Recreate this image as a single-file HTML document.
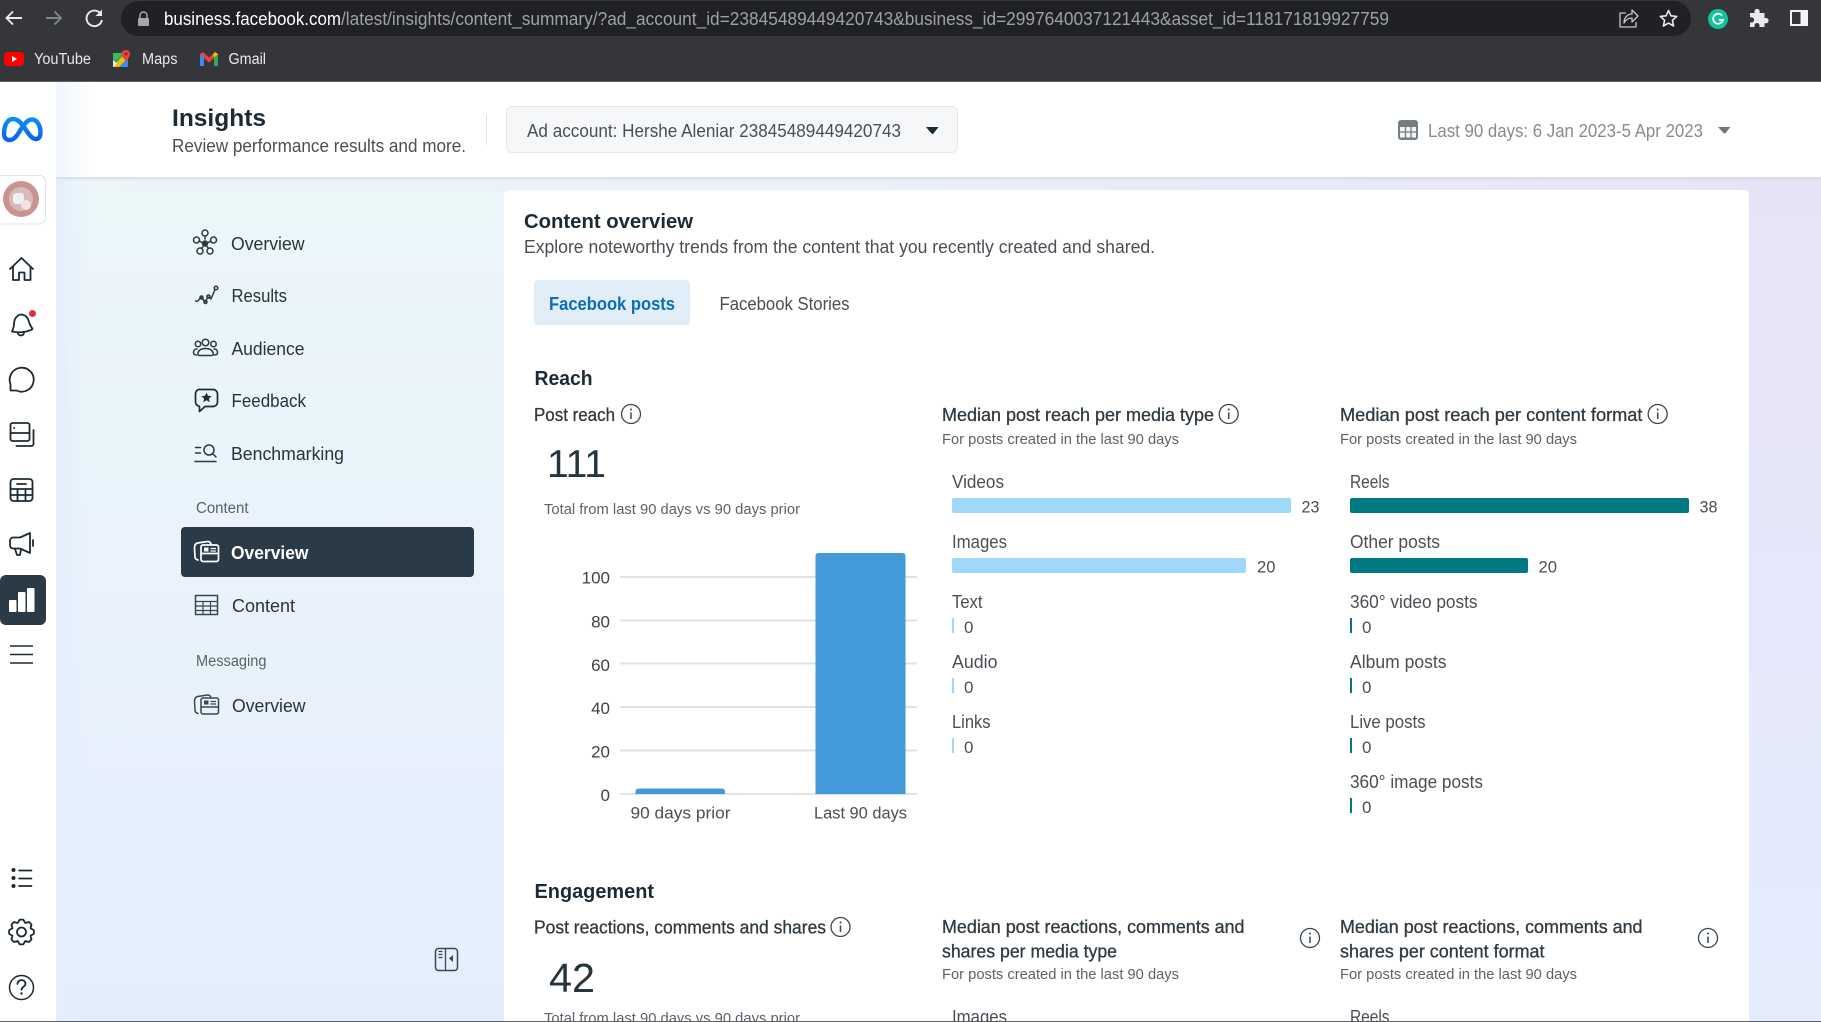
<!DOCTYPE html>
<html><head><meta charset="utf-8"><title>Insights</title>
<style>
html,body{margin:0;padding:0;width:1821px;height:1022px;overflow:hidden;background:#fff}
svg{display:block;position:absolute;left:0;top:0}
text{font-family:"Liberation Sans",sans-serif;white-space:pre}
.n{font-size:18px;fill:#26343d}
.b{font-size:18px;fill:#4a4f55}
.m{font-size:18px;fill:#2f3a42;stroke:#2f3a42;stroke-width:.3px}
.h{font-size:20px;font-weight:bold;fill:#1c2b33}
.s{font-size:15px;fill:#5b6268}
.v{font-size:17px;fill:#4a4f55}
.a{font-size:17px;fill:#3c4247}
.i{fill:none;stroke:#1c2b33;stroke-width:1.8;stroke-linecap:round;stroke-linejoin:round}
.j{fill:none;stroke:#2b3a44;stroke-width:1.5;stroke-linecap:round;stroke-linejoin:round}
</style></head><body>
<svg width="1821" height="1022" viewBox="0 0 1821 1022" xmlns="http://www.w3.org/2000/svg">
<defs>
<linearGradient id="bg" x1="0" y1="0" x2="0" y2="1"><stop offset="0" stop-color="#ebf6f9"/><stop offset=".45" stop-color="#eaf3fc"/><stop offset="1" stop-color="#e3edfc"/></linearGradient>
<linearGradient id="bgr" x1="0" y1="0" x2="0" y2="1"><stop offset="0" stop-color="#e7e3f6"/><stop offset=".5" stop-color="#e5e8fa"/><stop offset="1" stop-color="#e4ecfc"/></linearGradient>
<linearGradient id="band" x1="0" y1="0" x2="1" y2="0"><stop offset="0" stop-color="#ebf6f9"/><stop offset=".45" stop-color="#e9f0f8"/><stop offset="1" stop-color="#e7e3f6"/></linearGradient>
<linearGradient id="hl" x1="0" y1="0" x2="1" y2="0"><stop offset="0" stop-color="#f1f6fd"/><stop offset="1" stop-color="#ffffff"/></linearGradient>
<linearGradient id="mt" x1="0" y1="0" x2="0" y2="1"><stop offset="0" stop-color="#0b8cff"/><stop offset="1" stop-color="#0a63e8"/></linearGradient>
<linearGradient id="lft" x1="0" y1="0" x2="1" y2="0"><stop offset="0" stop-color="#e4eefc" stop-opacity=".9"/><stop offset="1" stop-color="#e4eefc" stop-opacity="0"/></linearGradient>
<linearGradient id="sh" x1="0" y1="0" x2="0" y2="1"><stop offset="0" stop-color="#cfd4da" stop-opacity=".7"/><stop offset="1" stop-color="#cfd4da" stop-opacity="0"/></linearGradient>
</defs>

<!-- page bg -->
<rect x="0" y="82" width="1821" height="940" fill="#fff"/>
<rect x="56" y="177" width="1765" height="845" fill="url(#bg)"/>
<rect x="56" y="177" width="1765" height="14" fill="url(#band)"/>
<rect x="1749" y="177" width="72" height="845" fill="url(#bgr)"/>
<rect x="56" y="177" width="30" height="845" fill="url(#lft)"/>
<rect x="56" y="82" width="40" height="95" fill="url(#hl)"/>
<rect x="56" y="177" width="1765" height="4" fill="url(#sh)"/>

<!-- browser chrome -->
<rect x="0" y="0" width="1821" height="81" fill="#35363a"/>
<rect x="0" y="81" width="1821" height="1" fill="#5f6368"/>
<rect x="121" y="1" width="1570" height="35" rx="17.5" fill="#202124"/>
<path d="M22 18H6.500M13 11.500 6.500 18l6.500 6.500" fill="none" stroke="#e8eaed" stroke-width="1.900"/>
<path d="M61 18H46M54.500 11.500 61 18l-6.500 6.500" fill="none" stroke="#82858a" stroke-width="1.900"/>
<path d="M100.500 13.500A7.800 7.800 0 1 0 102 20" fill="none" stroke="#e8eaed" stroke-width="1.900"/>
<path d="M102 9.500v6.500h-6.500z" fill="#e8eaed"/>
<rect x="138" y="18" width="11" height="8" rx="1" fill="#a4a6aa"/>
<path d="M140 18v-2.500a3.500 3.500 0 0 1 7 0V18" fill="none" stroke="#a4a6aa" stroke-width="1.500"/>
<text x="164" y="25" font-size="18" fill="#ffffff" textLength="177" lengthAdjust="spacingAndGlyphs">business.facebook.com</text>
<text x="341" y="25" font-size="18" fill="#9ea1a6" textLength="1048" lengthAdjust="spacingAndGlyphs">/latest/insights/content_summary/?ad_account_id=23845489449420743&amp;business_id=2997640037121443&amp;asset_id=118171819927759</text>
<path d="M1626 13h-6v14h16v-5M1624 23c0-6 4-9 8-9v-4l6 6-6 6v-4c-3 0-6 1-8 5z" fill="none" stroke="#c4c7ca" stroke-width="1.300" stroke-linejoin="round"/>
<path d="M1668.500 10.500l2.400 5.300 5.800.6-4.300 3.900 1.200 5.700-5.100-2.900-5.100 2.900 1.200-5.700-4.300-3.900 5.800-.6z" fill="none" stroke="#e8eaed" stroke-width="1.600" stroke-linejoin="round"/>
<circle cx="1718" cy="19" r="10" fill="#15c39a"/>
<path d="M1722 15.500a5 5 0 1 0 1 4.500h-4" fill="none" stroke="#fff" stroke-width="1.700"/>
<path d="M1750 14h4.500v-1.500a2.600 2.600 0 0 1 5.200 0V14h4.800v5h1.500a2.600 2.600 0 0 1 0 5.200h-1.500V28h-5v-1.500a2.500 2.500 0 0 0-5 0V28H1750v-4.500h1.500a2.600 2.600 0 0 0 0-5.200H1750z" fill="#e8eaed" transform="translate(0 -1)"/>
<rect x="1790" y="10" width="18" height="16" fill="#f1f3f4"/>
<rect x="1792" y="12" width="8.500" height="12" fill="#35363a"/>

<!-- bookmarks -->
<rect x="4" y="52" width="20" height="14" rx="3.500" fill="#f00"/>
<path d="M12 56v6l5-3z" fill="#fff"/>
<text x="34" y="64" font-size="15.500" fill="#e8eaed" textLength="57" lengthAdjust="spacingAndGlyphs">YouTube</text>
<rect x="113" y="53" width="15" height="14" fill="#34a853"/>
<path d="M113 66l11-11 4 3-9 9h-6z" fill="#fbbc04"/>
<path d="M113 60l4 3.500-3.500 3.500H113z" fill="#e8eef5"/>
<path d="M119 67l9-9v9z" fill="#4285f4"/>
<path d="M119 53h4l-7 7-3-2.500V53z" fill="#3fb960"/>
<path d="M126 50c-3 0-4.500 2-4.500 4 0 3 4.500 7 4.500 7s4-4 4-7c0-2-1.500-4-4-4z" fill="#ea4335"/>
<circle cx="126" cy="54" r="1.500" fill="#9a1f15"/>
<text x="142" y="64" font-size="15.500" fill="#e8eaed" textLength="35.500" lengthAdjust="spacingAndGlyphs">Maps</text>
<path d="M200 66V54l3-2 6 5.500 6-5.500 3 2v12h-4v-8l-5 4.500-5-4.500v8z" fill="#ea4335"/>
<path d="M200 54v12h4v-9z" fill="#4285f4"/>
<path d="M218 54v12h-4v-9z" fill="#34a853"/>
<path d="M215 52l3 2-4 3.500-1-3z" fill="#fbbc04"/>
<text x="228.500" y="64" font-size="15.500" fill="#e8eaed" textLength="37.500" lengthAdjust="spacingAndGlyphs">Gmail</text>

<!-- left rail -->
<path d="M4 134c0-9 3.500-15 9-15 5 0 8 3.500 13 11 4 6 6.500 9 10 9 3 0 4.500-2.500 4.500-6.500 0-7-3.500-13-8.500-13-4.500 0-8 4.500-12.500 12-4 6.500-6.500 8.500-10 8.500-3.500 0-5.500-2.500-5.500-6z" fill="none" stroke="url(#mt)" stroke-width="4.400"/>
<rect x="-4" y="175.500" width="49.500" height="48.500" rx="6" fill="#fff" stroke="#dfe4ea"/>
<circle cx="21" cy="199" r="18" fill="#c79491"/>
<circle cx="21" cy="199" r="12" fill="#d9b9b8"/>
<rect x="13" y="193" width="11" height="11" rx="3" fill="#eef0f1"/>
<circle cx="26" cy="205" r="5" fill="#efe3e5"/>
<path class="i" d="M10 269l11.500-11 11.500 11M13 266.500V280h6v-7.500h5.500V280h6v-13.500"/>
<path class="i" d="M15 332l-3-.5c.5-1.800 2-3.200 2-7.500 0-5 3-9 7-9.500 4 0 7 3 8 7.500 1 4 3 5.500 3.500 7-3 2-10 4-17.500 3zM18 333c.5 3 5 3.500 6 0"/>
<circle cx="32.500" cy="313.500" r="3.500" fill="#e0303f"/>
<path class="i" d="M10.500 390.500h6a12 12 0 1 0-6-6.500z"/>
<rect class="i" x="10.500" y="423" width="19" height="18" rx="2"/>
<path class="i" d="M10.500 433h19M14 428h.3M33.500 430v14a2 2 0 0 1-2 2h-15"/>
<rect class="i" x="10.500" y="479" width="22" height="22" rx="3"/>
<path class="i" d="M10.500 489h22M10.500 495h22M17.500 489v12M25.500 489v12M17 484h9"/>
<path class="i" d="M10 541c0-2 1-3.500 3-3.500h7l10-4.500v20l-10-4.500h-7c-2 0-3-1.500-3-3.500zM33 540v6M15 549l2 6h3l1-5.500"/>
<rect x="0" y="575" width="46" height="50" rx="6" fill="#2a3b47"/>
<rect x="9" y="600" width="7.500" height="12" rx="1" fill="#fff"/>
<rect x="18" y="592" width="7.500" height="20" rx="1" fill="#fff"/>
<rect x="27" y="588" width="7.500" height="24" rx="1" fill="#fff"/>
<path d="M10 646h23M10 654.500h23M10 663h23" fill="none" stroke="#1c2b33" stroke-width="1.600"/>
<path class="i" d="M19 870.500h12.500M19 878.500h12.500M19 886h12.500"/>
<circle cx="13.500" cy="870" r="2" fill="#1c2b33"/><circle cx="13.500" cy="878" r="2" fill="#1c2b33"/><circle cx="13.500" cy="886" r="2" fill="#1c2b33"/>
<g transform="translate(21.500 932)">
<circle class="i" cx="0" cy="0" r="4.500"/>
<path class="i" d="M-1.740-12.380L1.740-12.380 3.750-9.050 7.520-9.980 9.980-7.520 9.050-3.750 12.380-1.740 12.380 1.740 9.050 3.750 9.980 7.520 7.520 9.980 3.750 9.050 1.740 12.380-1.740 12.380-3.750 9.050-7.520 9.980-9.980 7.520-9.050 3.750-12.380 1.740-12.380-1.740-9.050-3.750-9.980-7.520-7.520-9.980-3.750-9.050Z"/>
</g>
<circle cx="21.500" cy="987.500" r="12" fill="none" stroke="#1c2b33" stroke-width="1.500"/>
<path class="i" d="M17.500 984c0-2.500 2-4 4-4s4 1.500 4 3.800c0 3-4 3-4 6"/><circle cx="21.500" cy="993.500" r="1.200" fill="#1c2b33"/>

<!-- header -->
<text x="172" y="126" font-size="24.500" font-weight="bold" fill="#1c2b33" textLength="94" lengthAdjust="spacingAndGlyphs">Insights</text>
<text x="172" y="152" class="b" textLength="294" lengthAdjust="spacingAndGlyphs">Review performance results and more.</text>
<rect x="486" y="115" width="1" height="30" fill="#dddfe2"/>
<rect x="506.500" y="106.500" width="451" height="46" rx="6" fill="#f6f7f8" stroke="#e4e6eb"/>
<text x="527" y="137" class="b" textLength="374" lengthAdjust="spacingAndGlyphs">Ad account: Hershe Aleniar 23845489449420743</text>
<path d="M926 127h12.500l-5 6.500a1.200 1.200 0 0 1-2 0z" fill="#1c2b33"/>
<rect x="1398" y="120" width="20" height="20" rx="3" fill="#767d83"/>
<path d="M1400 127h16v10.500h-16z" fill="#f2f3f4"/>
<path d="M1405.500 127v11M1411 127v11M1400 132h16M1403 123.500h10" stroke="#767d83" stroke-width="1.300" fill="none"/>
<text x="1428" y="137" font-size="18" fill="#858c92" textLength="275" lengthAdjust="spacingAndGlyphs">Last 90 days: 6 Jan 2023-5 Apr 2023</text>
<path d="M1718 127h12.500l-5 6a1.200 1.200 0 0 1-2 0z" fill="#6f767c"/>

<!-- nav -->
<rect x="181" y="527" width="293" height="50" rx="4" fill="#2a3b47"/>
<g class="j">
 <path d="M205 236v3M199 241l3 1.500M211 241l-3 1.500M201.500 248.500l1.500-2M208.500 248.500l-1.500-2"/>
 <circle cx="205" cy="233" r="3"/><circle cx="196.500" cy="240" r="3"/><circle cx="213.500" cy="240" r="3"/><circle cx="200" cy="251" r="3"/><circle cx="210" cy="251" r="3"/><circle cx="205" cy="243.500" r="2.500" fill="#2b3a44"/>
</g>
<g class="j">
 <path d="M195.500 301c2 1 3-.5 4-2l2-1.500 3.500 4.500 3-5 3 2 4-9.500"/>
 <circle cx="216" cy="288" r="1.800"/><circle cx="201.500" cy="297.500" r="1.500"/><circle cx="205.500" cy="302" r="1.500"/><circle cx="208.500" cy="296.500" r="1.500"/>
</g>
<g class="j">
 <circle cx="205.500" cy="342.500" r="3.300"/><circle cx="198" cy="344" r="2.700"/><circle cx="213.500" cy="344" r="2.700"/>
 <path d="M199.500 355.500h12c2 0 2-1.500 1.500-3-1-2.500-3.500-4-7.500-4s-6.500 1.500-7.500 4c-.5 1.500 0 3 1.500 3zM197 349c-2.500 0-3.500 1-3.500 3.500 0 1.500 1 2.500 3 2.500M214 349c2.500 0 3.500 1 3.500 3.500 0 1.500-1 2.500-3 2.500"/>
</g>
<path d="M200 389.500h13a4.500 4.500 0 0 1 4.500 4.500v8a4.500 4.500 0 0 1-4.500 4.500h-8l-5.500 5v-5.200c-2.500-.5-4-2-4-4.500v-8a4.500 4.500 0 0 1 4.500-4.500z" fill="none" stroke="#1c2b33" stroke-width="1.700" stroke-linejoin="round"/>
<path d="M206.500 392.500l1.500 3.300 3.600.4-2.700 2.400.8 3.600-3.200-1.900-3.200 1.900.8-3.600-2.700-2.400 3.600-.4z" fill="#1c2b33"/>
<g class="j">
 <path d="M195.500 447.500h5M195.500 453h5M195 461.500h21"/>
 <circle cx="209" cy="450" r="5"/><path d="M212.500 453.500l3.500 3.500"/>
</g>
<g fill="none" stroke="#fff" stroke-width="1.700" stroke-linejoin="round" stroke-linecap="round">
 <rect x="201" y="545" width="17.500" height="16.500" rx="2"/>
 <path d="M201 553.500h17.500"/>
 <path d="M198 560c-2-.5-2.800-1.500-3-3l-.5-9c0-3 1-4.500 3-5l10-1.500c1.500 0 3 1 3.500 2.500"/>
</g>
<rect x="204" y="547.500" width="4.500" height="4" fill="#fff"/><path d="M210.500 548.500h5.500M210.500 551h5.500" stroke="#fff" stroke-width="1.200"/>
<g fill="none" stroke="#3a4750" stroke-width="1.500">
 <rect x="195.500" y="595.500" width="22" height="19"/><path d="M195.500 601.500h22M195.500 606h22M195.500 610.500h22M203 601.500v13M210.500 601.500v13" stroke-width="1.200"/>
</g>
<g fill="none" stroke="#3a4750" stroke-width="1.500" stroke-linejoin="round" stroke-linecap="round">
 <rect x="201" y="698" width="17.500" height="16" rx="2"/>
 <path d="M201 707h17.500"/>
 <path d="M198 713.500c-2-.5-2.800-1.500-3-3l-.5-9c0-3 1-4.500 3-5l10-1.500c1.500 0 3 1 3.500 2.500"/>
</g>
<rect x="204" y="700.500" width="4.500" height="4" fill="#3a4750"/><path d="M210.500 701.500h5.500M210.500 704h5.500" stroke="#3a4750" stroke-width="1.200"/>

<text x="231" y="250" class="n" textLength="73.500" lengthAdjust="spacingAndGlyphs">Overview</text>
<text x="231.500" y="302" class="n" textLength="55.500" lengthAdjust="spacingAndGlyphs">Results</text>
<text x="231.500" y="355" class="n" textLength="73" lengthAdjust="spacingAndGlyphs">Audience</text>
<text x="231.500" y="407" class="n" textLength="74.500" lengthAdjust="spacingAndGlyphs">Feedback</text>
<text x="231" y="460" class="n" textLength="113" lengthAdjust="spacingAndGlyphs">Benchmarking</text>
<text x="196" y="513" font-size="15.500" fill="#59626a" textLength="52.500" lengthAdjust="spacingAndGlyphs">Content</text>
<text x="231" y="559" font-size="18" font-weight="bold" fill="#fff" textLength="77.500" lengthAdjust="spacingAndGlyphs">Overview</text>
<text x="232" y="612" class="n" textLength="63" lengthAdjust="spacingAndGlyphs">Content</text>
<text x="196" y="666" font-size="15.500" fill="#59626a" textLength="70.500" lengthAdjust="spacingAndGlyphs">Messaging</text>
<text x="232" y="712" class="n" textLength="73.500" lengthAdjust="spacingAndGlyphs">Overview</text>
<rect x="435.500" y="948.500" width="22" height="22" rx="3" fill="none" stroke="#3a4750" stroke-width="1.500"/>
<path d="M445.500 948.500v22M438.500 951.500h4M438.500 954.500h4M438.500 957.500h4" stroke="#3a4750" stroke-width="1.300" fill="none"/>
<path d="M453 955v7l-4-3.500z" fill="#3a4750"/>

<!-- card -->
<rect x="504" y="190" width="1245" height="840" rx="6" fill="#fff"/>
<text x="524" y="228" class="h" textLength="169" lengthAdjust="spacingAndGlyphs">Content overview</text>
<text x="524" y="253" class="b" textLength="631" lengthAdjust="spacingAndGlyphs">Explore noteworthy trends from the content that you recently created and shared.</text>
<rect x="534" y="280" width="156" height="45" rx="4" fill="#e1edf7"/>
<text x="549" y="310" font-size="18" font-weight="bold" fill="#0b6fb5" textLength="126" lengthAdjust="spacingAndGlyphs">Facebook posts</text>
<text x="719.500" y="310" class="b" textLength="130" lengthAdjust="spacingAndGlyphs">Facebook Stories</text>

<text x="534.500" y="385" class="h" textLength="58" lengthAdjust="spacingAndGlyphs">Reach</text>
<text x="534" y="421" class="m" textLength="81" lengthAdjust="spacingAndGlyphs">Post reach</text>
<g fill="none" stroke="#3a4750" stroke-width="1.300">
 <circle cx="631" cy="414" r="9.500"/><circle cx="1228.700" cy="414" r="9.500"/><circle cx="1657.700" cy="414" r="9.500"/>
 <circle cx="840.500" cy="927" r="9.500"/><circle cx="1310" cy="938" r="9.500"/><circle cx="1708" cy="938" r="9.500"/>
 <path d="M631 412.500v6.500M1228.700 412.500v6.500M1657.700 412.500v6.500M840.500 925.500v6.500M1310 936.500v6.500M1708 936.500v6.500" stroke-width="1.500"/>
</g>
<g fill="#3a4750"><circle cx="631" cy="409.500" r="1"/><circle cx="1228.700" cy="409.500" r="1"/><circle cx="1657.700" cy="409.500" r="1"/><circle cx="840.500" cy="922.500" r="1"/><circle cx="1310" cy="933.500" r="1"/><circle cx="1708" cy="933.500" r="1"/></g>

<text x="547" y="477" font-size="39" fill="#26343d" textLength="59" lengthAdjust="spacing">111</text>
<text x="544" y="514" class="s" textLength="256" lengthAdjust="spacingAndGlyphs">Total from last 90 days vs 90 days prior</text>

<!-- chart -->
<g fill="#e2e2e3">
 <rect x="620" y="576" width="297" height="2"/><rect x="620" y="619.500" width="297" height="2"/><rect x="620" y="662.500" width="297" height="2"/><rect x="620" y="706" width="297" height="2"/><rect x="620" y="749.500" width="297" height="2"/><rect x="620" y="793" width="297" height="2"/>
</g>
<g class="a" text-anchor="end">
 <text x="610" y="583.500">100</text><text x="610" y="627.500">80</text><text x="610" y="671">60</text><text x="610" y="714">40</text><text x="610" y="757.500">20</text><text x="610" y="801">0</text>
</g>
<path d="M635.500 794v-2.500a3 3 0 0 1 3-3h83.500a3 3 0 0 1 3 3v2.500z" fill="#429bd8"/>
<path d="M815.500 794V556a3 3 0 0 1 3-3h84a3 3 0 0 1 3 3v238z" fill="#429bd8"/>
<text x="630.500" y="818.500" class="v" textLength="100" lengthAdjust="spacingAndGlyphs">90 days prior</text>
<text x="814" y="818.500" class="v" textLength="93" lengthAdjust="spacingAndGlyphs">Last 90 days</text>

<!-- media type -->
<text x="942" y="421" class="m" textLength="272" lengthAdjust="spacingAndGlyphs">Median post reach per media type</text>
<text x="942" y="444" class="s" textLength="237" lengthAdjust="spacingAndGlyphs">For posts created in the last 90 days</text>
<text x="952" y="488" class="b" textLength="52" lengthAdjust="spacingAndGlyphs">Videos</text>
<rect x="952" y="498" width="339" height="15" rx="2" fill="#9fd8f8"/>
<text x="1301.500" y="512.500" class="v" textLength="18" lengthAdjust="spacingAndGlyphs">23</text>
<text x="952" y="548" class="b" textLength="55" lengthAdjust="spacingAndGlyphs">Images</text>
<rect x="952" y="558" width="294" height="15" rx="2" fill="#9fd8f8"/>
<text x="1257" y="572.500" class="v" textLength="18.500" lengthAdjust="spacingAndGlyphs">20</text>
<text x="952" y="608" class="b" textLength="30.500" lengthAdjust="spacingAndGlyphs">Text</text>
<rect x="952" y="618" width="2" height="15" fill="#9fd8f8"/>
<text x="964" y="633" class="v">0</text>
<text x="952" y="668" class="b" textLength="45.500" lengthAdjust="spacingAndGlyphs">Audio</text>
<rect x="952" y="678" width="2" height="15" fill="#9fd8f8"/>
<text x="964" y="693" class="v">0</text>
<text x="952" y="728" class="b" textLength="38.500" lengthAdjust="spacingAndGlyphs">Links</text>
<rect x="952" y="738" width="2" height="15" fill="#9fd8f8"/>
<text x="964" y="753" class="v">0</text>

<!-- content format -->
<text x="1340" y="421" class="m" textLength="302.500" lengthAdjust="spacingAndGlyphs">Median post reach per content format</text>
<text x="1340" y="444" class="s" textLength="237" lengthAdjust="spacingAndGlyphs">For posts created in the last 90 days</text>
<text x="1350" y="488" class="b" textLength="39.500" lengthAdjust="spacingAndGlyphs">Reels</text>
<rect x="1350" y="498" width="339" height="15" rx="2" fill="#007a80"/>
<text x="1699.500" y="512.500" class="v" textLength="18" lengthAdjust="spacingAndGlyphs">38</text>
<text x="1350" y="548" class="b" textLength="90" lengthAdjust="spacingAndGlyphs">Other posts</text>
<rect x="1350" y="558" width="178" height="15" rx="2" fill="#007a80"/>
<text x="1538.500" y="572.500" class="v" textLength="18.500" lengthAdjust="spacingAndGlyphs">20</text>
<text x="1350" y="608" class="b" textLength="127.500" lengthAdjust="spacingAndGlyphs">360° video posts</text>
<rect x="1350" y="618" width="2" height="15" fill="#007a80"/>
<text x="1362" y="633" class="v">0</text>
<text x="1350" y="668" class="b" textLength="96.500" lengthAdjust="spacingAndGlyphs">Album posts</text>
<rect x="1350" y="678" width="2" height="15" fill="#007a80"/>
<text x="1362" y="693" class="v">0</text>
<text x="1350" y="728" class="b" textLength="75.500" lengthAdjust="spacingAndGlyphs">Live posts</text>
<rect x="1350" y="738" width="2" height="15" fill="#007a80"/>
<text x="1362" y="753" class="v">0</text>
<text x="1350" y="788" class="b" textLength="133" lengthAdjust="spacingAndGlyphs">360° image posts</text>
<rect x="1350" y="798" width="2" height="15" fill="#007a80"/>
<text x="1362" y="813" class="v">0</text>

<!-- engagement -->
<text x="534.500" y="898" class="h" textLength="119.500" lengthAdjust="spacingAndGlyphs">Engagement</text>
<text x="534" y="933.500" class="m" textLength="292" lengthAdjust="spacingAndGlyphs">Post reactions, comments and shares</text>
<text x="549" y="992" font-size="41" fill="#26343d" textLength="46" lengthAdjust="spacingAndGlyphs">42</text>
<text x="544" y="1023" class="s" textLength="256" lengthAdjust="spacingAndGlyphs">Total from last 90 days vs 90 days prior</text>
<text x="942" y="933" class="m" textLength="302.500" lengthAdjust="spacingAndGlyphs">Median post reactions, comments and</text>
<text x="942" y="957.500" class="m" textLength="175" lengthAdjust="spacingAndGlyphs">shares per media type</text>
<text x="942" y="979" class="s" textLength="237" lengthAdjust="spacingAndGlyphs">For posts created in the last 90 days</text>
<text x="952" y="1023" class="b" textLength="55" lengthAdjust="spacingAndGlyphs">Images</text>
<text x="1340" y="933" class="m" textLength="302.500" lengthAdjust="spacingAndGlyphs">Median post reactions, comments and</text>
<text x="1340" y="957.500" class="m" textLength="204.500" lengthAdjust="spacingAndGlyphs">shares per content format</text>
<text x="1340" y="979" class="s" textLength="237" lengthAdjust="spacingAndGlyphs">For posts created in the last 90 days</text>
<text x="1350" y="1023" class="b" textLength="39.500" lengthAdjust="spacingAndGlyphs">Reels</text>

<rect x="0" y="1021" width="1821" height="1" fill="#5f6368"/>
</svg>
</body></html>
